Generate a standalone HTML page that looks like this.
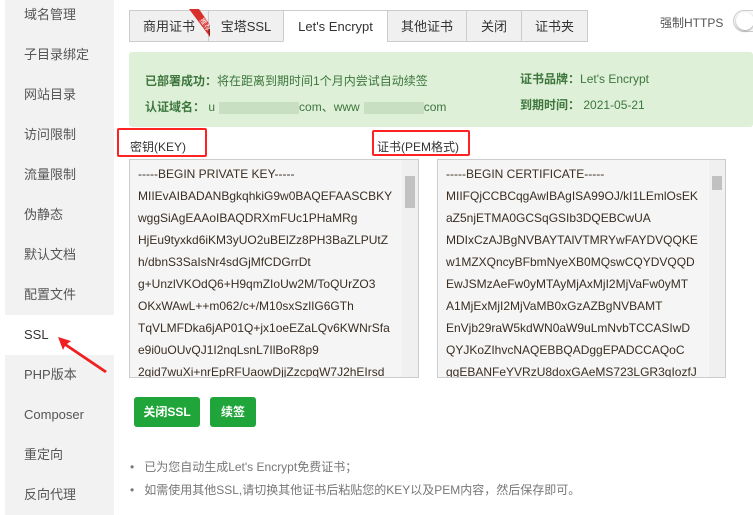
<!DOCTYPE html>
<html><head><meta charset="utf-8"><style>
*{margin:0;padding:0;box-sizing:border-box}
body{width:753px;height:502px;overflow:hidden;background:#fff;font-family:"Liberation Sans","Noto Sans CJK SC",sans-serif;font-size:12px;color:#555;position:relative}
.it{position:absolute;left:5px;width:109px;height:40px;background:#f2f2f2;font-size:13px;color:#555;padding-left:19px;line-height:40px}
.tab{position:absolute;top:10px;height:32px;border:1px solid #ccc;background:#f0f0f0;text-align:center;line-height:32px;font-size:13px;color:#333}
.green{position:absolute;left:129px;top:52px;width:624px;height:75px;background:#dff0d8;border-radius:3px;color:#3c763d;font-size:12px}
.green div{position:absolute}
.green b{font-weight:bold}
.blur{display:inline-block;height:12px;background:#c9dfc2;vertical-align:middle}
.lbl{position:absolute;font-size:12px;color:#333}
.rbox{position:absolute;border:2px solid #f22;border-radius:2px}
.ta{position:absolute;top:159px;height:219px;border:1px solid #ccc;background:#f5f5f5;overflow:hidden;font-size:12px;color:#3a2e22;padding:3px 0 0 8px;line-height:22px;white-space:nowrap}
.sb{position:absolute;right:0;top:0;width:16px;height:100%;background:#f0f0f0}
.sb i{position:absolute;left:3px;top:16px;width:10px;height:32px;background:#c1c1c1}
.btn{position:absolute;top:397px;height:30px;background:#20a53a;color:#fff;border-radius:3px;text-align:center;line-height:30px;font-size:12px;font-weight:bold}
.tip{position:absolute;left:130px;font-size:12px;color:#777}
</style></head><body>
<div class="it" style="top:-5px">域名管理</div>
<div class="it" style="top:35px">子目录绑定</div>
<div class="it" style="top:75px">网站目录</div>
<div class="it" style="top:115px">访问限制</div>
<div class="it" style="top:155px">流量限制</div>
<div class="it" style="top:195px">伪静态</div>
<div class="it" style="top:235px">默认文档</div>
<div class="it" style="top:275px">配置文件</div>
<div class="it" style="top:315px;background:#fff;color:#333">SSL</div>
<div class="it" style="top:355px">PHP版本</div>
<div class="it" style="top:395px">Composer</div>
<div class="it" style="top:435px">重定向</div>
<div class="it" style="top:475px">反向代理</div>
<svg style="position:absolute;left:55px;top:335px" width="55" height="40"><path d="M3 2 L16 6 L12 9 L52 36 L50 38 L10 11 L8 15 Z" fill="#f02020"/></svg>
<div class="tab" style="left:129px;width:80px">商用证书</div>
<div class="tab" style="left:208px;width:76px">宝塔SSL</div>
<div class="tab" style="left:283px;width:105px;background:#fff;border-bottom-color:#fff">Let's Encrypt</div>
<div class="tab" style="left:387px;width:80px">其他证书</div>
<div class="tab" style="left:466px;width:56px">关闭</div>
<div class="tab" style="left:521px;width:67px">证书夹</div>
<svg style="position:absolute;left:184px;top:7px" width="30" height="32"><path d="M5 2 L15 2 L26 18 L26 30 Z" fill="#d9302c"/><path d="M23 20 L26 18 L26 30 Z" fill="#8a1a18"/><text x="17" y="14" font-size="7" fill="#fff" transform="rotate(55 17 12)" font-family="Noto Sans CJK SC">推荐</text></svg>
<div style="position:absolute;left:660px;top:14px;font-size:12px;color:#555">强制HTTPS</div>
<div style="position:absolute;left:733px;top:10px;width:40px;height:22px;border:1px solid #ccc;border-radius:11px;background:#fafafa"><div style="position:absolute;left:2px;top:1px;width:18px;height:18px;border-radius:50%;background:#fff;box-shadow:0 1px 2px #999"></div></div>
<div class="green">
<div style="left:16px;top:20px"><b>已部署成功：</b>将在距离到期时间1个月内尝试自动续签</div>
<div style="left:16px;top:46px"><b>认证域名：</b> u<span class="blur" style="width:80px;margin-left:4px"></span>com、www<span class="blur" style="width:60px;margin-left:4px"></span>com</div>
<div style="left:391px;top:18px"><b>证书品牌：</b>Let's Encrypt</div>
<div style="left:391px;top:44px"><b>到期时间：</b> 2021-05-21</div>
</div>
<div class="lbl" style="left:130px;top:138px">密钥(KEY)</div>
<div class="rbox" style="left:117px;top:128px;width:90px;height:29px"></div>
<div class="lbl" style="left:377px;top:138px">证书(PEM格式)</div>
<div class="rbox" style="left:372px;top:130px;width:98px;height:26px"></div>
<div class="ta" style="left:129px;width:290px">-----BEGIN PRIVATE KEY-----<br>MIIEvAIBADANBgkqhkiG9w0BAQEFAASCBKY<br>wggSiAgEAAoIBAQDRXmFUc1PHaMRg<br>HjEu9tyxkd6iKM3yUO2uBElZz8PH3BaZLPUtZ<br>h/dbnS3SaIsNr4sdGjMfCDGrrDt<br>g+UnzlVKOdQ6+H9qmZIoUw2M/ToQUrZO3<br>OKxWAwL++m062/c+/M10sxSzlIG6GTh<br>TqVLMFDka6jAP01Q+jx1oeEZaLQv6KWNrSfa<br>e9i0uOUvQJ1I2nqLsnL7IlBoR8p9<br>2qid7wuXi+nrEpRFUaowDjjZzcpgW7J2hEIrsd<div class="sb"><i></i></div></div>
<div class="ta" style="left:437px;width:289px">-----BEGIN CERTIFICATE-----<br>MIIFQjCCBCqgAwIBAgISA99OJ/kI1LEmlOsEK<br>aZ5njETMA0GCSqGSIb3DQEBCwUA<br>MDIxCzAJBgNVBAYTAlVTMRYwFAYDVQQKE<br>w1MZXQncyBFbmNyeXB0MQswCQYDVQQD<br>EwJSMzAeFw0yMTAyMjAxMjI2MjVaFw0yMT<br>A1MjExMjI2MjVaMB0xGzAZBgNVBAMT<br>EnVjb29raW5kdWN0aW9uLmNvbTCCASIwD<br>QYJKoZIhvcNAQEBBQADggEPADCCAQoC<br>ggEBANFeYVRzU8doxGAeMS723LGR3qIozfJ<div class="sb"><i style="height:14px"></i></div></div>
<div class="btn" style="left:134px;width:66px">关闭SSL</div>
<div class="btn" style="left:210px;width:46px">续签</div>
<div class="tip" style="top:458px">•&nbsp;&nbsp;&nbsp;已为您自动生成Let's Encrypt免费证书；</div>
<div class="tip" style="top:481px">•&nbsp;&nbsp;&nbsp;如需使用其他SSL,请切换其他证书后粘贴您的KEY以及PEM内容，然后保存即可。</div>
</body></html>
